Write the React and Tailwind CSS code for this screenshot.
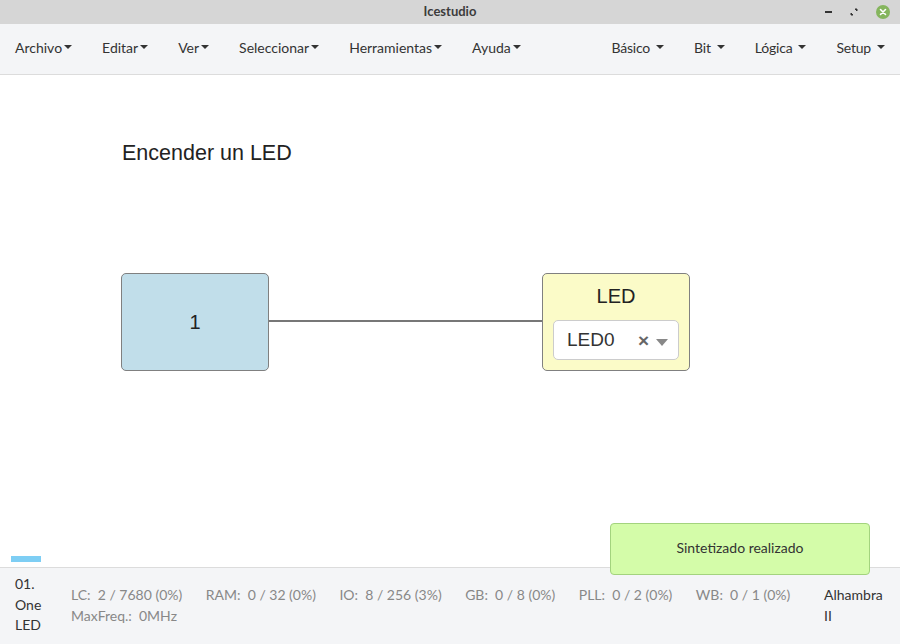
import React from 'react';

const leftMenus = ['Archivo', 'Editar', 'Ver', 'Seleccionar', 'Herramientas', 'Ayuda'];
const rightMenus = ['Básico', 'Bit', 'Lógica', 'Setup'];

const stats = [
  ['LC:', '2 / 7680 (0%)'],
  ['RAM:', '0 / 32 (0%)'],
  ['IO:', '8 / 256 (3%)'],
  ['GB:', '0 / 8 (0%)'],
  ['PLL:', '0 / 2 (0%)'],
  ['WB:', '0 / 1 (0%)'],
];

const Caret = () => (
  <span className="inline-block ml-[2px] align-middle border-x-[4px] border-x-transparent border-t-[4px] border-t-[#333]" />
);

const App = () => {
  return (
    <div className="w-[900px] h-[644px] flex flex-col bg-white relative overflow-hidden font-['Lato','Open_Sans',sans-serif]">
      {/* Title bar */}
      <div className="h-[24px] bg-[#d6d6d6] flex items-center justify-center relative shrink-0">
        <span className="text-[13px] font-bold text-[#3c3c3c]">Icestudio</span>
        <div className="absolute right-[10px] top-0 h-full flex items-center gap-[17px]">
          <span className="w-[7px] h-[2px] bg-[#333]" />
          <svg width="10" height="10" viewBox="0 0 10 10">
            <path d="M6 2h2v2zM4 8H2V6z" fill="#333" stroke="#333" strokeWidth="1" />
          </svg>
          <span className="w-[14px] h-[14px] rounded-full bg-[#85b55d] flex items-center justify-center">
            <svg width="8" height="8" viewBox="0 0 8 8">
              <path d="M1.5 1.5l5 5M6.5 1.5l-5 5" stroke="#fff" strokeWidth="1.6" strokeLinecap="round" />
            </svg>
          </span>
        </div>
      </div>

      {/* Menu bar */}
      <div className="h-[51px] bg-[#f4f5f7] border-b border-[#dcdcdc] flex items-center justify-between shrink-0 text-[14px] text-[#333] pb-[4px]">
        <div className="flex items-center">
          {leftMenus.map(m => (
            <div key={m} className="px-[15px] flex items-center">
              {m}<Caret />
            </div>
          ))}
        </div>
        <div className="flex items-center">
          {rightMenus.map(m => (
            <div key={m} className="px-[15px] flex items-center gap-[4px] tracking-[-0.2px]">
              {m} <Caret />
            </div>
          ))}
        </div>
      </div>

      {/* Canvas */}
      <div className="flex-1 relative font-['Liberation_Sans',sans-serif] text-[#222]">
        <div className="absolute left-[122px] top-[65px] text-[21.5px] leading-[26px]">Encender un LED</div>

        <div className="absolute left-[121px] top-[198px] w-[148px] h-[98px] bg-[#c1deea] border border-[#808080] rounded-[5px] flex items-center justify-center text-[20px]">
          1
        </div>

        <div className="absolute left-[269px] top-[245px] w-[273px] h-[2px] bg-[#777]" />

        <div className="absolute left-[542px] top-[198px] w-[148px] h-[98px] bg-[#fbfbc8] border border-[#808080] rounded-[5px] flex flex-col items-center">
          <div className="text-[20px] mt-[10px] leading-[24px]">LED</div>
          <div className="mt-[12px] w-[126px] h-[40px] bg-white border border-[#ccc] rounded-[5px] flex items-center pl-[13px] pr-[10px]">
            <span className="text-[19px] text-[#333]">LED0</span>
            <span className="ml-auto text-[19px] font-bold text-[#666] leading-none">×</span>
            <span className="ml-[7px] mt-[4px] inline-block border-x-[6px] border-x-transparent border-t-[7px] border-t-[#888]" />
          </div>
        </div>

        <div className="absolute left-[11px] bottom-[5px] w-[30px] h-[6px] bg-[#7ecef4]" />
      </div>

      {/* Footer */}
      <div className="h-[77px] bg-[#f4f5f7] border-t border-[#dcdcdc] flex items-start shrink-0 text-[14px] pl-[15px] pt-[6px]">
        <div className="w-[30px] leading-[20.5px] text-[#333]">01. One LED</div>
        <div className="ml-[26px] pt-[10px] text-[#888] leading-[21px] w-[735px]">
          <div className="flex gap-x-[23.5px]">
            {stats.map(([k, v]) => (
              <span key={k} className="whitespace-pre">{k}  {v}</span>
            ))}
          </div>
          <div className="whitespace-pre">MaxFreq.:  0MHz</div>
        </div>
        <div className="ml-[18px] pt-[10px] w-[64px] leading-[21px] text-[#333]">Alhambra II</div>
      </div>

      {/* Toast */}
      <div className="absolute left-[610px] top-[523px] w-[260px] h-[52px] pb-[3px] bg-[#d4fca9] border border-[#a3d37e] rounded-[4px] flex items-center justify-center text-[14px] text-[#333]">
        Sintetizado realizado
      </div>
    </div>
  );
};

export default App;
